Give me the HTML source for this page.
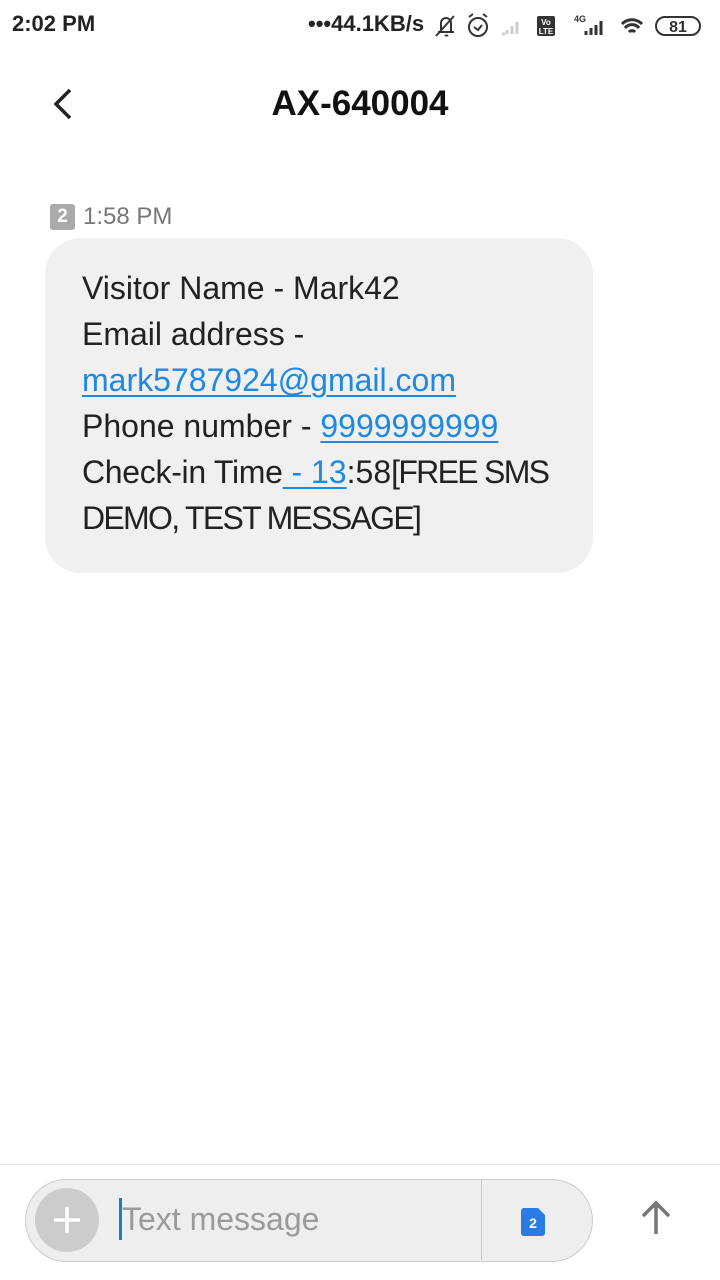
<!DOCTYPE html><html><head><meta charset="utf-8"><style>
body{margin:0;width:720px;height:1280px;background:#fff;font-family:"Liberation Sans",Roboto,sans-serif;position:relative;overflow:hidden}
.a{position:absolute}
.l{color:#1e88e5;text-decoration:underline;text-decoration-thickness:2px;text-underline-offset:4px}
.c{letter-spacing:-1.7px}
</style></head><body>
<div class="a" style="left:12px;top:11px;font-size:22px;font-weight:bold;color:#222">2:02 PM</div>
<div class="a" style="left:308px;top:11px;font-size:22px;font-weight:bold;color:#222">•••44.1KB/s</div>
<svg class="a" style="left:432px;top:10px" width="280" height="32" viewBox="0 0 280 32" fill="none" stroke="#333" stroke-width="2">
<path d="M6 22h16M9 22V13a5 5 0 0 1 10 0v9M4 26L22 6M13 25a2 2 0 0 0 3 0"/>
<circle cx="46" cy="17" r="9"/><path d="M42 17l4 3 4-5M37 7l4-3M55 7l-4-3"/>
<path d="M70 24h3M75 24v-4M80 24v-8M85 24v-12" stroke="#ccc" stroke-width="3"/>
<rect x="105" y="6" width="18" height="20" rx="2" fill="#333" stroke="none"/>
<text x="114" y="15" font-size="8" fill="#fff" stroke="none" text-anchor="middle" font-family="Liberation Sans" font-weight="bold">Vo</text>
<text x="114" y="24" font-size="8" fill="#fff" stroke="none" text-anchor="middle" font-family="Liberation Sans" font-weight="bold">LTE</text>
<text x="142" y="12" font-size="9" fill="#333" stroke="none" font-family="Liberation Sans" font-weight="bold">4G</text>
<path d="M154 25v-4M159 25v-7M164 25v-10M169 25v-14" stroke-width="3"/>
<path d="M190 14a14 14 0 0 1 20 0M193 18a9 9 0 0 1 14 0M197 22a4 4 0 0 1 6 0" stroke-width="3"/>
<rect x="224" y="7" width="44" height="18" rx="9"/>
<text x="246" y="22" font-size="16" fill="#333" stroke="none" text-anchor="middle" font-family="Liberation Sans" font-weight="bold">81</text>
</svg>
<svg class="a" style="left:48px;top:86px" width="30" height="36" viewBox="0 0 30 36"><path d="M22 4L8 18l14 14" fill="none" stroke="#222" stroke-width="3.5"/></svg>
<div class="a" style="left:0;width:720px;top:84px;text-align:center;font-size:35px;font-weight:bold;color:#111">AX-640004</div>
<div class="a" style="left:50px;top:204px;width:25px;height:26px;background:#aaa;border-radius:3px;color:#fff;font-size:19px;font-weight:bold;text-align:center;line-height:26px">2</div>
<div class="a" style="left:83px;top:203px;font-size:24px;color:#777">1:58 PM</div>
<div class="a" style="left:45px;top:238px;width:548px;height:335px;background:#f0f0f0;border-radius:36px"></div>
<div class="a" style="left:82px;top:265px;font-size:32px;line-height:46px;color:#222;white-space:nowrap">Visitor Name - Mark42<br>Email address -<br><span class="l">mark5787924@gmail.com</span><br>Phone number - <span class="l">9999999999</span><br><span style="letter-spacing:-0.3px">Check-in Time</span><span class="l"> - 13</span>:58<span class="c">[FREE SMS</span><br><span class="c">DEMO, TEST MESSAGE]</span></div>
<div class="a" style="left:0;top:1164px;width:720px;height:1px;background:#e3e3e3"></div>
<div class="a" style="left:25px;top:1179px;width:568px;height:83px;background:#eee;border:1px solid #ccc;border-radius:42px;box-sizing:border-box"></div>
<div class="a" style="left:481px;top:1180px;width:1px;height:80px;background:#ccc"></div>
<div class="a" style="left:35px;top:1188px;width:64px;height:64px;border-radius:50%;background:#ccc"></div>
<svg class="a" style="left:35px;top:1188px" width="64" height="64"><path d="M32 19v26M19 32h26" stroke="#fff" stroke-width="3.5"/></svg>
<div class="a" style="left:119px;top:1198px;width:3px;height:42px;background:#1a7fc0"></div>
<div class="a" style="left:122px;top:1201px;font-size:32px;color:#9a9a9a">Text message</div>
<svg class="a" style="left:521px;top:1208px" width="26" height="28"><path d="M3 0h14l7 7v18a3 3 0 0 1-3 3H3a3 3 0 0 1-3-3V3a3 3 0 0 1 3-3z" fill="#2a7ae8"/><text x="12" y="20" font-size="14" fill="#fff" text-anchor="middle" font-family="Liberation Sans" font-weight="bold">2</text></svg>
<svg class="a" style="left:638px;top:1198px" width="36" height="40"><path d="M18 36V5M5 18L18 5l13 13" fill="none" stroke="#777" stroke-width="3.5"/></svg>
</body></html>
